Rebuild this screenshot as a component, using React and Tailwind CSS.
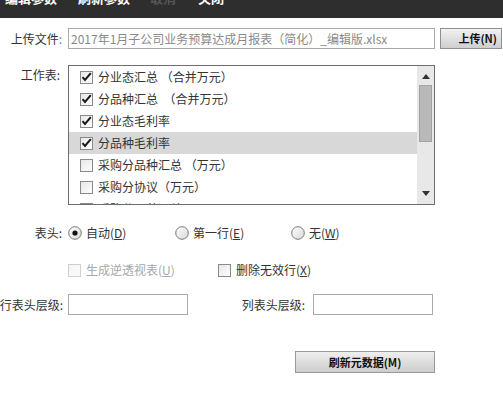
import React from "react";

const font = { fontFamily: '"Noto Sans CJK SC", "Noto Sans", sans-serif' };

function Check({ checked, disabled }) {
  return (
    <svg width="13" height="13" viewBox="0 0 13 13" className="shrink-0">
      <defs>
        <linearGradient id={disabled ? "cbd" : "cb"} x1="0" y1="0" x2="1" y2="1">
          <stop offset="0" stopColor={disabled ? "#f4f4f4" : "#e6e6e6"} />
          <stop offset="1" stopColor={disabled ? "#fbfbfb" : "#ffffff"} />
        </linearGradient>
      </defs>
      <rect x="0.5" y="0.5" width="12" height="12" fill={`url(#${disabled ? "cbd" : "cb"})`} stroke={disabled ? "#cfcfcf" : "#8a8a8a"} />
      {checked && (
        <path d="M2.5 6.2 L5 9 L10.8 2.2" fill="none" stroke="#1a1a1a" strokeWidth="2" />
      )}
    </svg>
  );
}

function Radio({ checked }) {
  return (
    <svg width="14" height="14" viewBox="0 0 14 14" className="shrink-0">
      <defs>
        <linearGradient id="rg" x1="0" y1="0" x2="1" y2="1">
          <stop offset="0" stopColor="#ffffff" />
          <stop offset="1" stopColor="#d8d8d8" />
        </linearGradient>
      </defs>
      <circle cx="7" cy="7" r="6.3" fill="url(#rg)" stroke="#7a7a7a" />
      {checked && <circle cx="7" cy="7" r="2.6" fill="#111" />}
    </svg>
  );
}

const items = [
  { t: "分业态汇总 （合并万元）", c: true },
  { t: "分品种汇总  （合并万元）", c: true },
  { t: "分业态毛利率", c: true },
  { t: "分品种毛利率", c: true, sel: true },
  { t: "采购分品种汇总 （万元）", c: false },
  { t: "采购分协议（万元）", c: false },
  { t: "采购分品种汇总", c: false },
];

export default function App() {
  return (
    <div className="w-[503px] h-[404px] bg-white overflow-hidden text-[12px] text-[#333]" style={font}>
      {/* top bar */}
      <div className="h-[18px] bg-[#2e2e2e] overflow-hidden">
        <div className="flex -mt-[10px] text-[13px] leading-[16px] font-bold text-white">
          <span className="ml-[5px]">编辑参数</span>
          <span className="ml-[21px]">刷新参数</span>
          <span className="ml-[20px] text-[#555]">取消</span>
          <span className="ml-[22px]">关闭</span>
        </div>
      </div>

      {/* upload row */}
      <div className="mt-[10px] flex items-center h-[21px]">
        <div className="w-[62px] flex justify-end whitespace-nowrap">上传文件<span className="text-[#3b8be0]">:</span></div>
        <div className="ml-[6px] w-[367px] h-[21px] border border-[#aaa] flex items-center pl-[2px] text-[#8a8a8a] whitespace-nowrap overflow-hidden">
          2017年1月子公司业务预算达成月报表（简化）_编辑版.xlsx
        </div>
        <button className="ml-[5px] w-[62px] h-[21px] border border-[#8f8f8f] bg-gradient-to-b from-[#f2f2f2] to-[#cfcfcf] flex items-center justify-end pr-[4px] text-[11px] font-bold text-[#111]">
          上传(N)
        </button>
      </div>

      {/* worksheet list */}
      <div className="mt-[16px] flex items-start">
        <div className="w-[62px] flex justify-end whitespace-nowrap pr-[2px] pt-[1px]">工作表:</div>
        <div className="ml-[6px] w-[367px] h-[140px] border border-[#6e6e6e] flex overflow-hidden">
          <div className="flex-1">
            {items.map((it, i) => (
              <div key={i} className={`h-[22px] flex items-center pl-[11px] ${it.sel ? "bg-[#d8d8d8]" : ""}`}>
                <Check checked={it.c} />
                <span className="ml-[5px] whitespace-pre">{it.t}</span>
              </div>
            ))}
          </div>
          <div className="w-[17px] bg-[#e8e8e8] flex flex-col items-center">
            <svg width="8" height="5" viewBox="0 0 8 5" className="mt-[8px]">
              <path d="M0 5 L4 0 L8 5 Z" fill="#333" />
            </svg>
            <div className="mt-[6px] w-[13px] h-[57px] bg-[#b9b9b9] border border-[#a3a3a3]" />
            <div className="flex-1" />
            <svg width="8" height="5" viewBox="0 0 8 5" className="mb-[8px]">
              <path d="M0 0 L8 0 L4 5 Z" fill="#333" />
            </svg>
          </div>
        </div>
      </div>

      {/* header row */}
      <div className="mt-[18px] flex items-center h-[20px]">
        <div className="w-[62px] flex justify-end whitespace-nowrap">表头:</div>
        <div className="ml-[6px] flex items-center w-[107px]">
          <Radio checked />
          <span className="ml-[4px]">自动(<u>D</u>)</span>
        </div>
        <div className="flex items-center w-[116px]">
          <Radio />
          <span className="ml-[4px]">第一行(<u>E</u>)</span>
        </div>
        <div className="flex items-center">
          <Radio />
          <span className="ml-[4px]">无(<u>W</u>)</span>
        </div>
      </div>

      {/* options row */}
      <div className="mt-[17px] flex items-center h-[20px]">
        <div className="ml-[68px] flex items-center w-[150px] text-[#a8a8a8]">
          <Check disabled />
          <span className="ml-[5px]">生成逆透视表(<u>U</u>)</span>
        </div>
        <div className="flex items-center">
          <Check />
          <span className="ml-[5px]">删除无效行(<u>X</u>)</span>
        </div>
      </div>

      {/* level row */}
      <div className="mt-[14px] flex items-center h-[21px]">
        <div className="w-[63px] flex justify-end whitespace-nowrap">行表头层级:</div>
        <div className="ml-[5px] w-[120px] h-[21px] border border-[#aaa] shrink-0" />
        <div className="ml-[55px] w-[62px] flex justify-end whitespace-nowrap">列表头层级:</div>
        <div className="ml-[8px] w-[120px] h-[21px] border border-[#aaa] shrink-0" />
      </div>

      {/* refresh button */}
      <div className="mt-[36px] ml-[295px]">
        <button className="w-[140px] h-[22px] border border-[#999] bg-gradient-to-b from-[#efefef] to-[#cdcdcd] text-[11px] font-bold text-[#111] flex items-center justify-center">
          刷新元数据(M)
        </button>
      </div>
    </div>
  );
}
